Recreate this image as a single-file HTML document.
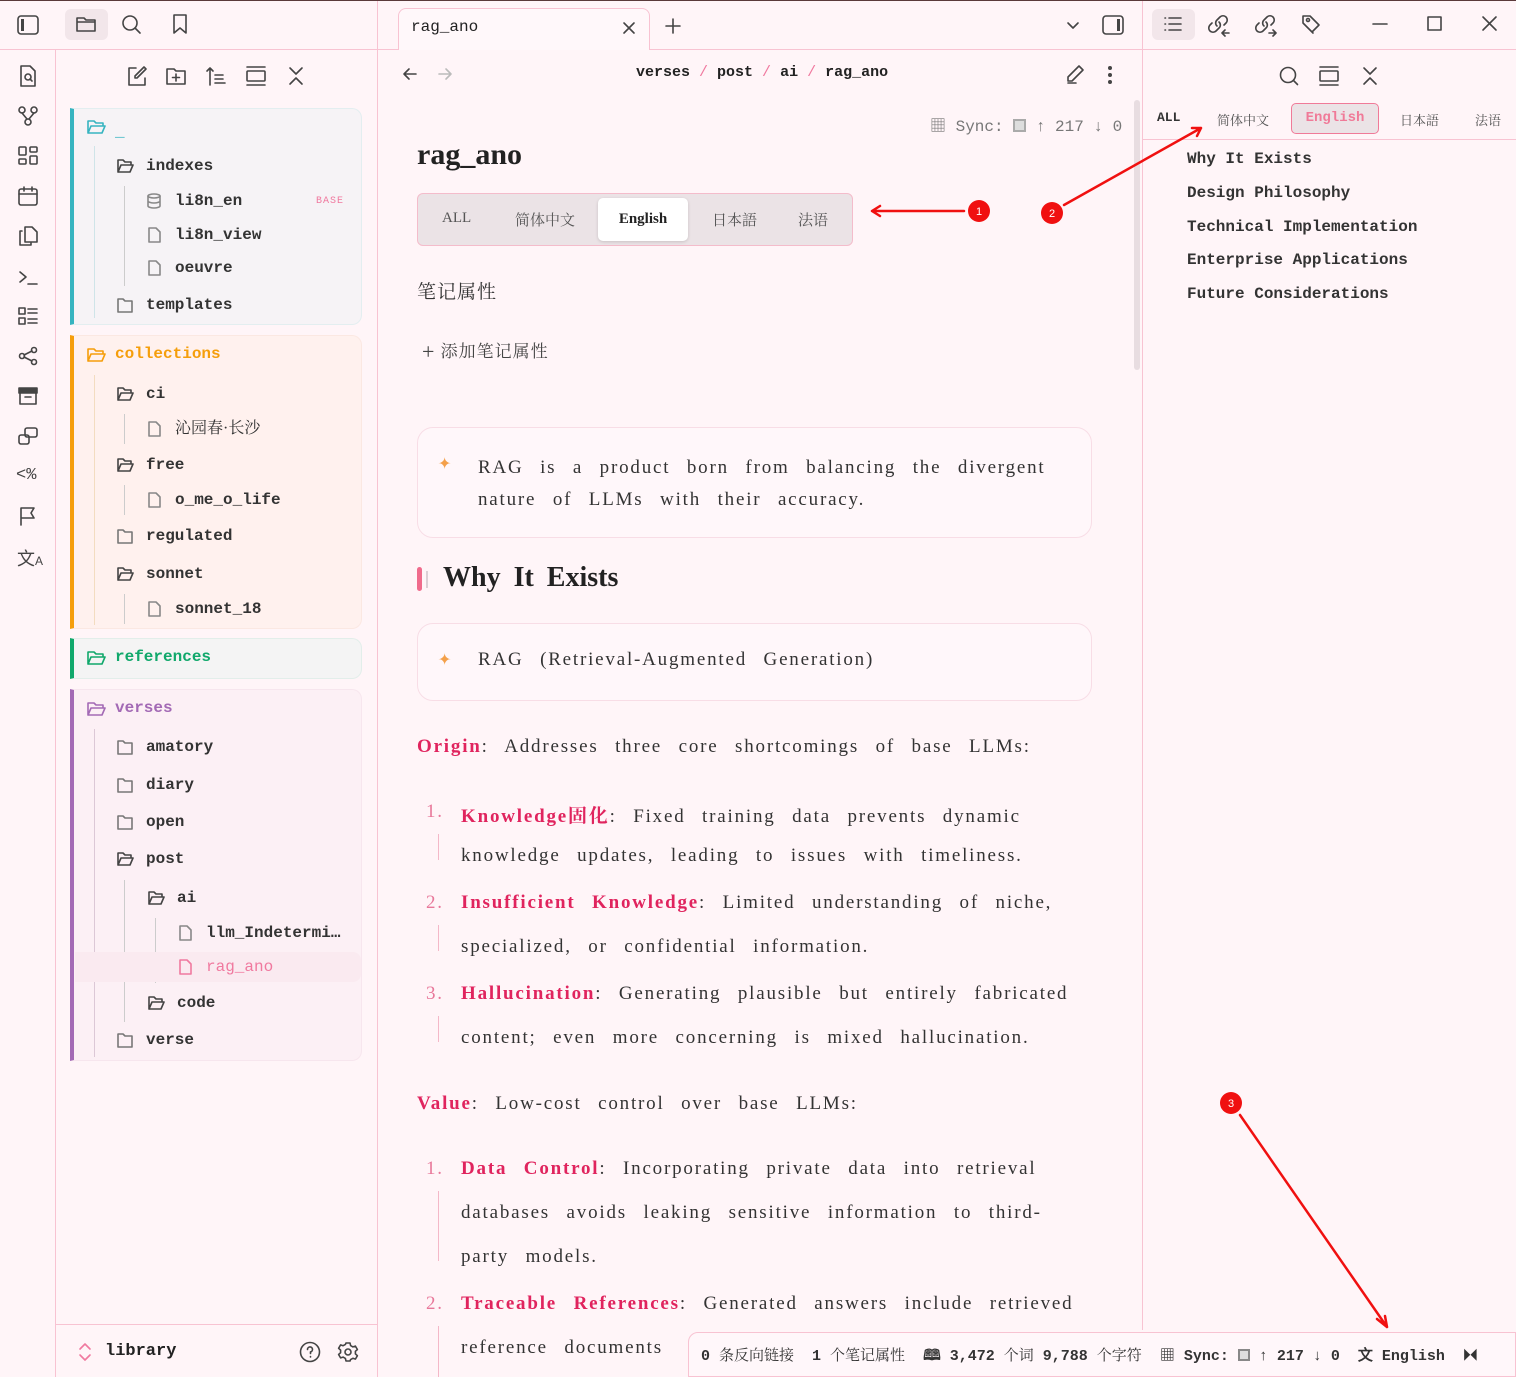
<!DOCTYPE html>
<html><head><meta charset="utf-8"><style>
*{box-sizing:border-box;margin:0;padding:0}
body{width:1516px;height:1377px;background:#fff5f8;position:relative;overflow:hidden;font-family:"Liberation Mono","Noto Sans CJK SC",monospace;color:#2b2b2b}
.a{position:absolute}
.mono{font-family:"Liberation Mono","Noto Sans CJK SC",monospace}
.serif{font-family:"Liberation Serif","Noto Serif CJK SC",serif}
svg{stroke:#444;fill:none;stroke-width:1.6;stroke-linecap:round;stroke-linejoin:round}
.card{position:absolute;left:70px;width:292px;border-radius:0 10px 10px 0}
.row{position:absolute;font-size:16px;font-weight:bold;color:#333;height:22px;line-height:22px;white-space:nowrap}
.row svg{position:absolute;left:-30px;top:2px;width:18px;height:18px}
.p{font-size:19px;letter-spacing:1.8px;word-spacing:10px;color:#333}
.red{color:#e0245e;font-weight:bold}
.num{color:#e8789a}
.bar{position:absolute;width:1px;background:#f4b8c8}
</style></head><body>
<div class="a" style="left:0;top:49px;width:1516px;height:1px;background:#f8c3d2"></div>
<div class="a" style="left:55px;top:50px;width:1px;height:1327px;background:#f8c3d2"></div>
<div class="a" style="left:377px;top:0;width:1px;height:1377px;background:#f8c3d2"></div>
<div class="a" style="left:1142px;top:0;width:1px;height:1330px;background:#f8c3d2"></div>
<div class="a" style="left:1143px;top:139px;width:373px;height:1px;background:#f8c3d2"></div>
<div class="a" style="left:55px;top:1324px;width:322px;height:1px;background:#f8c3d2"></div>
<div class="a" style="left:0;top:0;width:1516px;height:1px;background:#5a3a3a"></div>

<svg class="a" style="left:16px;top:14px" width="24" height="22" viewBox="0 0 24 22"><rect x="2" y="2" width="20" height="18" rx="3"/><rect x="5" y="5" width="3" height="12" fill="#444" stroke="none"/></svg>
<div class="a" style="left:65px;top:9px;width:43px;height:31px;background:#f2e6ea;border-radius:6px"></div>
<svg class="a" style="left:75px;top:14px" width="22" height="20" viewBox="0 0 22 20"><path d="M2 4h7l2 2h9v11H2z M2 8h18"/></svg>
<svg class="a" style="left:121px;top:14px" width="22" height="22" viewBox="0 0 22 22"><circle cx="9" cy="9" r="7"/><path d="M14 14l5 5"/></svg>
<svg class="a" style="left:170px;top:13px" width="20" height="22" viewBox="0 0 20 22"><path d="M4 2h12v18l-6-5-6 5z"/></svg>

<svg class="a" style="left:17px;top:64px" width="22" height="24" viewBox="0 0 22 24"><path d="M4 2h9l5 5v15H4z"/><circle cx="11" cy="13" r="3"/><path d="M13 15l2 2"/></svg>
<svg class="a" style="left:17px;top:105px" width="22" height="22" viewBox="0 0 22 22"><circle cx="5" cy="5" r="3"/><circle cx="17" cy="5" r="3"/><circle cx="11" cy="17" r="3"/><path d="M5 8l5 6M17 8l-5 6"/></svg>
<svg class="a" style="left:17px;top:145px" width="22" height="22" viewBox="0 0 22 22"><rect x="2" y="2" width="7" height="8" rx="1"/><rect x="13" y="2" width="7" height="5" rx="1"/><rect x="2" y="14" width="7" height="5" rx="1"/><rect x="13" y="11" width="7" height="8" rx="1"/></svg>
<svg class="a" style="left:17px;top:185px" width="22" height="22" viewBox="0 0 22 22"><rect x="2" y="4" width="18" height="16" rx="2"/><path d="M2 9h18M7 2v4M15 2v4"/></svg>
<svg class="a" style="left:17px;top:225px" width="22" height="22" viewBox="0 0 22 22"><path d="M8 2h7l5 5v10H8z M5 6H3v14h11v-2"/></svg>
<svg class="a" style="left:17px;top:266px" width="22" height="22" viewBox="0 0 22 22"><path d="M3 6l6 5-6 5M11 18h9"/></svg>
<svg class="a" style="left:17px;top:305px" width="22" height="22" viewBox="0 0 22 22"><rect x="2" y="3" width="6" height="6"/><rect x="2" y="13" width="6" height="6"/><path d="M11 4h9M11 8h9M11 14h9M11 18h9"/></svg>
<svg class="a" style="left:17px;top:345px" width="22" height="22" viewBox="0 0 22 22"><circle cx="5" cy="11" r="2.5"/><circle cx="17" cy="5" r="2.5"/><circle cx="17" cy="17" r="2.5"/><path d="M7 10l8-4M7 12l8 4"/></svg>
<svg class="a" style="left:17px;top:385px" width="22" height="22" viewBox="0 0 22 22"><rect x="2" y="3" width="18" height="5" fill="#444"/><path d="M3 8v11h16V8M8 12h6"/></svg>
<svg class="a" style="left:17px;top:425px" width="22" height="22" viewBox="0 0 22 22"><rect x="8" y="3" width="12" height="9" rx="2"/><rect x="2" y="10" width="10" height="9" rx="2"/></svg>
<div class="a" style="left:16px;top:466px;font-size:17px;color:#444">&lt;%</div>
<svg class="a" style="left:17px;top:505px" width="22" height="22" viewBox="0 0 22 22"><path d="M4 20V3h13l-3 5 3 5H4"/></svg>
<div class="a" style="left:17px;top:545px;font-size:18px;color:#444;font-family:'Liberation Sans',sans-serif">文<span style="font-size:12px">A</span></div>

<svg class="a" style="left:126px;top:65px" width="22" height="22" viewBox="0 0 22 22"><path d="M10 3H3v17h16v-7M18 2l2 2-9 9H9v-2z"/></svg>
<svg class="a" style="left:165px;top:65px" width="22" height="22" viewBox="0 0 22 22"><path d="M2 4h7l2 2h9v13H2zM11 9v7M7.5 12.5h7"/></svg>
<svg class="a" style="left:205px;top:65px" width="22" height="22" viewBox="0 0 22 22"><path d="M5 20V3M2 6l3-3 3 3M10 10h8M10 14h8M10 18h10"/></svg>
<svg class="a" style="left:245px;top:65px" width="22" height="22" viewBox="0 0 22 22"><path d="M2 2h18M2 20h18"/><rect x="2" y="6" width="18" height="10" rx="1"/></svg>
<svg class="a" style="left:285px;top:65px" width="22" height="22" viewBox="0 0 22 22"><path d="M5 3l6 6 6-6M5 19l6-6 6 6"/></svg>

<div class="card" style="top:108px;height:217px;background:#f6f3f6;border:1px solid #e3eef0;border-left:4px solid #36b4c0"></div>
<svg class="a" style="left:86px;top:118px;stroke:#36b4c0" width="20" height="18" viewBox="0 0 20 18"><path d="M2 3h6l2 2h7v3M2 3v12h14l3-7H5l-3 7"/></svg>
<div class="a" style="left:115px;top:123px;color:#36b4c0;font-weight:bold">_</div>
<div class="bar" style="left:94px;top:146px;height:172px;background:#cfe4e8"></div>
<div class="row" style="left:146px;top:155px">indexes<svg viewBox="0 0 18 18"><path d="M2 3h5l2 2h6v3M2 3v12h12l3-7H5l-3 7"/></svg></div>
<div class="bar" style="left:124px;top:186px;height:100px;background:#ccc"></div>
<div class="row" style="left:175px;top:190px">li8n_en<svg viewBox="0 0 18 18" style="stroke:#888"><ellipse cx="9" cy="4" rx="6" ry="2"/><path d="M3 4v10c0 1 3 2 6 2s6-1 6-2V4M3 9c0 1 3 2 6 2s6-1 6-2"/></svg></div>
<div class="a" style="left:316px;top:196px;font-size:10px;color:#f0799f;letter-spacing:1px">BASE</div>
<div class="row" style="left:175px;top:224px">li8n_view<svg viewBox="0 0 18 18" style="stroke:#888"><path d="M4 2h7l4 4v10H4z"/></svg></div>
<div class="row" style="left:175px;top:257px">oeuvre<svg viewBox="0 0 18 18" style="stroke:#888"><path d="M4 2h7l4 4v10H4z"/></svg></div>
<div class="row" style="left:146px;top:294px">templates<svg viewBox="0 0 18 18" style="stroke:#777"><path d="M2 3h5l2 2h7v11H2z"/></svg></div>

<div class="card" style="top:335px;height:294px;background:#fff1ee;border:1px solid #fbe8e2;border-left:4px solid #f59e0b"></div>
<svg class="a" style="left:86px;top:346px;stroke:#f59e0b" width="20" height="18" viewBox="0 0 20 18"><path d="M2 3h6l2 2h7v3M2 3v12h14l3-7H5l-3 7"/></svg>
<div class="a" style="left:115px;top:345px;color:#f59e0b;font-weight:bold;font-size:16px">collections</div>
<div class="bar" style="left:94px;top:375px;height:250px;background:#f3dcc0"></div>
<div class="row" style="left:146px;top:383px">ci<svg viewBox="0 0 18 18"><path d="M2 3h5l2 2h6v3M2 3v12h12l3-7H5l-3 7"/></svg></div>
<div class="bar" style="left:124px;top:414px;height:30px;background:#ccc"></div>
<div class="row serif" style="left:175px;top:418px;font-weight:normal">沁园春·长沙<svg viewBox="0 0 18 18" style="stroke:#888"><path d="M4 2h7l4 4v10H4z"/></svg></div>
<div class="row" style="left:146px;top:454px">free<svg viewBox="0 0 18 18"><path d="M2 3h5l2 2h6v3M2 3v12h12l3-7H5l-3 7"/></svg></div>
<div class="bar" style="left:124px;top:485px;height:30px;background:#ccc"></div>
<div class="row" style="left:175px;top:489px">o_me_o_life<svg viewBox="0 0 18 18" style="stroke:#888"><path d="M4 2h7l4 4v10H4z"/></svg></div>
<div class="row" style="left:146px;top:525px">regulated<svg viewBox="0 0 18 18" style="stroke:#777"><path d="M2 3h5l2 2h7v11H2z"/></svg></div>
<div class="row" style="left:146px;top:563px">sonnet<svg viewBox="0 0 18 18"><path d="M2 3h5l2 2h6v3M2 3v12h12l3-7H5l-3 7"/></svg></div>
<div class="bar" style="left:124px;top:594px;height:30px;background:#ccc"></div>
<div class="row" style="left:175px;top:598px">sonnet_18<svg viewBox="0 0 18 18" style="stroke:#888"><path d="M4 2h7l4 4v10H4z"/></svg></div>

<div class="card" style="top:638px;height:41px;background:#f4f4f4;border:1px solid #e2eeea;border-left:4px solid #10a86b"></div>
<svg class="a" style="left:86px;top:649px;stroke:#10a86b" width="20" height="18" viewBox="0 0 20 18"><path d="M2 3h6l2 2h7v3M2 3v12h14l3-7H5l-3 7"/></svg>
<div class="a" style="left:115px;top:648px;color:#10a86b;font-weight:bold;font-size:16px">references</div>

<div class="card" style="top:689px;height:372px;background:#fcf0f5;border:1px solid #f7e6ee;border-left:4px solid #a36ab5"></div>
<svg class="a" style="left:86px;top:700px;stroke:#a36ab5" width="20" height="18" viewBox="0 0 20 18"><path d="M2 3h6l2 2h7v3M2 3v12h14l3-7H5l-3 7"/></svg>
<div class="a" style="left:115px;top:699px;color:#a36ab5;font-weight:bold;font-size:16px">verses</div>
<div class="bar" style="left:94px;top:729px;height:328px;background:#dcc8d6"></div>
<div class="row" style="left:146px;top:736px">amatory<svg viewBox="0 0 18 18" style="stroke:#777"><path d="M2 3h5l2 2h7v11H2z"/></svg></div>
<div class="row" style="left:146px;top:774px">diary<svg viewBox="0 0 18 18" style="stroke:#777"><path d="M2 3h5l2 2h7v11H2z"/></svg></div>
<div class="row" style="left:146px;top:811px">open<svg viewBox="0 0 18 18" style="stroke:#777"><path d="M2 3h5l2 2h7v11H2z"/></svg></div>
<div class="row" style="left:146px;top:848px">post<svg viewBox="0 0 18 18"><path d="M2 3h5l2 2h6v3M2 3v12h12l3-7H5l-3 7"/></svg></div>
<div class="bar" style="left:124px;top:880px;height:142px;background:#ccc"></div>
<div class="row" style="left:177px;top:887px">ai<svg viewBox="0 0 18 18"><path d="M2 3h5l2 2h6v3M2 3v12h12l3-7H5l-3 7"/></svg></div>
<div class="bar" style="left:155px;top:918px;height:65px;background:#ccc"></div>
<div class="a" style="left:75px;top:952px;width:286px;height:30px;background:#faeaf0;border-radius:0 8px 8px 0"></div>
<div class="row" style="left:206px;top:922px">llm_Indetermi…<svg viewBox="0 0 18 18" style="stroke:#888"><path d="M4 2h7l4 4v10H4z"/></svg></div>
<div class="row" style="left:206px;top:956px;color:#f0799f;font-weight:normal">rag_ano<svg viewBox="0 0 18 18" style="stroke:#f0799f"><path d="M4 2h7l4 4v10H4z"/></svg></div>
<div class="row" style="left:177px;top:992px">code<svg viewBox="0 0 18 18"><path d="M2 3h5l2 2h6v3M2 3v12h12l3-7H5l-3 7"/></svg></div>
<div class="row" style="left:146px;top:1029px">verse<svg viewBox="0 0 18 18" style="stroke:#777"><path d="M2 3h5l2 2h7v11H2z"/></svg></div>

<svg class="a" style="left:77px;top:1342px;stroke:#f0799f" width="16" height="20" viewBox="0 0 16 20"><path d="M3 7l5-5 5 5M3 13l5 5 5-5"/></svg>
<div class="a" style="left:105px;top:1342px;font-size:17px;font-weight:bold;color:#222">library</div>
<svg class="a" style="left:299px;top:1341px" width="22" height="22" viewBox="0 0 22 22"><circle cx="11" cy="11" r="9.5"/><path d="M8.5 8.5a2.5 2.5 0 1 1 3 2.4v1.6M11.5 15.5v.5"/></svg>
<svg class="a" style="left:337px;top:1341px" width="22" height="22" viewBox="0 0 22 22"><circle cx="11" cy="11" r="3"/><path d="M9 2h4l.6 2.6 2.3 1.3 2.5-.8 2 3.4-2 1.8v2.6l2 1.8-2 3.4-2.5-.8-2.3 1.3L13 20H9l-.6-2.6-2.3-1.3-2.5.8-2-3.4 2-1.8V9.1l-2-1.8 2-3.4 2.5.8 2.3-1.3z"/></svg>

<div class="a" style="left:398px;top:8px;width:252px;height:42px;background:#fff8fa;border:1px solid #f8c3d2;border-bottom:none;border-radius:8px 8px 0 0"></div>
<div class="a" style="left:411px;top:18px;font-size:16px;color:#222">rag_ano</div>
<svg class="a" style="left:621px;top:20px" width="16" height="16" viewBox="0 0 16 16"><path d="M3 3l10 10M13 3L3 13"/></svg>
<svg class="a" style="left:663px;top:16px" width="20" height="20" viewBox="0 0 20 20"><path d="M10 3v14M3 10h14"/></svg>
<svg class="a" style="left:1065px;top:19px" width="16" height="14" viewBox="0 0 16 14"><path d="M3 4l5 5 5-5"/></svg>
<svg class="a" style="left:1101px;top:14px" width="24" height="22" viewBox="0 0 24 22"><rect x="2" y="2" width="20" height="18" rx="3"/><rect x="16" y="5" width="3" height="12" fill="#444" stroke="none"/></svg>

<svg class="a" style="left:400px;top:64px" width="20" height="20" viewBox="0 0 20 20"><path d="M16 10H4M9 5l-5 5 5 5"/></svg>
<svg class="a" style="left:435px;top:64px;stroke:#bbb" width="20" height="20" viewBox="0 0 20 20"><path d="M4 10h12M11 5l5 5-5 5"/></svg>
<div class="a" style="left:636px;top:64px;font-size:15px;font-weight:bold;color:#222;white-space:nowrap">verses <span style="color:#f0799f;font-weight:normal">/</span> post <span style="color:#f0799f;font-weight:normal">/</span> ai <span style="color:#f0799f;font-weight:normal">/</span> rag_ano</div>
<svg class="a" style="left:1064px;top:63px" width="22" height="22" viewBox="0 0 22 22"><path d="M15 3l4 4L8 18H4v-4zM4 20h8"/></svg>
<div class="a" style="left:1108px;top:66px;width:4px;height:4px;border-radius:2px;background:#444;box-shadow:0 7px 0 #444,0 14px 0 #444"></div>

<div class="a" style="left:930px;top:112px;font-size:16px;color:#777;white-space:nowrap">▦ Sync: <span style="display:inline-block;width:13px;height:13px;border:2px solid #aaa;background:#ddd;vertical-align:-1px"></span> ↑ 217 ↓ 0</div>
<div class="a" style="left:1134px;top:100px;width:6px;height:270px;background:#e8dde1;border-radius:3px"></div>

<div class="a serif" style="left:417px;top:138px;font-size:30px;font-weight:bold;color:#222">rag_ano</div>

<div class="a serif" style="left:417px;top:193px;width:436px;height:53px;background:#ebe3e6;border:1px solid #f4bccb;border-radius:6px;font-size:15px;color:#555">
<span class="a" style="left:24px;top:16px">ALL</span>
<span class="a" style="left:97px;top:15px">简体中文</span>
<span class="a" style="left:180px;top:4px;width:90px;height:43px;background:#fff;border-radius:5px;box-shadow:0 1px 3px rgba(0,0,0,.15);text-align:center;line-height:43px;color:#222;font-weight:bold">English</span>
<span class="a" style="left:294px;top:15px">日本語</span>
<span class="a" style="left:380px;top:15px">法语</span>
</div>

<svg class="a" style="left:0;top:0;stroke:#f01010;stroke-width:2.5" width="1516" height="1377" viewBox="0 0 1516 1377">
<path d="M964 211H872M880 206l-8 5 8 5"/>
<path d="M1064 205L1201 128M1192 128l9 0-4 8"/>
<path d="M1240 1115L1387 1327M1377 1319l10 8-2-11"/>
<circle cx="979" cy="211" r="11" fill="#f01010" stroke="none"/>
<circle cx="1052" cy="213" r="11" fill="#f01010" stroke="none"/>
<circle cx="1231" cy="1103" r="11" fill="#f01010" stroke="none"/>
<text x="979" y="215" fill="#fff" stroke="none" font-size="11" text-anchor="middle" font-family="Liberation Sans">1</text>
<text x="1052" y="217" fill="#fff" stroke="none" font-size="11" text-anchor="middle" font-family="Liberation Sans">2</text>
<text x="1231" y="1107" fill="#fff" stroke="none" font-size="11" text-anchor="middle" font-family="Liberation Sans">3</text>
</svg>

<div class="a serif" style="left:417px;top:277px;font-size:19px;color:#333;letter-spacing:1px">笔记属性</div>
<div class="a serif" style="left:422px;top:337px;font-size:17px;color:#444;letter-spacing:1px"><span style="font-size:22px;vertical-align:-2px">+</span> 添加笔记属性</div>

<div class="a" style="left:417px;top:427px;width:675px;height:111px;border:1px solid #f8dde6;border-radius:16px;background:#fff7fa"></div>
<div class="a" style="left:438px;top:450px;color:#f4a04a;font-size:22px">✦</div>
<div class="a serif p" style="left:478px;top:452px;width:600px;line-height:32px">RAG is a product born from balancing the divergent nature of LLMs with their accuracy.</div>

<div class="a" style="left:417px;top:567px;width:5px;height:24px;background:#f06b8c;border-radius:3px"></div>
<div class="a" style="left:426px;top:571px;width:2px;height:17px;background:#dcd0d6"></div>
<div class="a serif" style="left:443px;top:562px;font-size:28px;font-weight:bold;color:#222;word-spacing:6px">Why It Exists</div>

<div class="a" style="left:417px;top:623px;width:675px;height:78px;border:1px solid #f8dde6;border-radius:16px;background:#fff7fa"></div>
<div class="a" style="left:438px;top:646px;color:#f4a04a;font-size:22px">✦</div>
<div class="a serif p" style="left:478px;top:649px;white-space:nowrap">RAG (Retrieval-Augmented Generation)</div>

<div class="a serif p" style="left:417px;top:736px;white-space:nowrap"><span class="red">Origin</span>: Addresses three core shortcomings of base LLMs:</div>

<div class="a serif p num" style="left:426px;top:801px">1.</div>
<div class="a serif p" style="left:461px;top:801px;white-space:nowrap"><span class="red">Knowledge固化</span>: Fixed training data prevents dynamic</div>
<div class="bar" style="left:438px;top:834px;height:26px"></div>
<div class="a serif p" style="left:461px;top:845px;white-space:nowrap">knowledge updates, leading to issues with timeliness.</div>

<div class="a serif p num" style="left:426px;top:892px">2.</div>
<div class="a serif p" style="left:461px;top:892px;white-space:nowrap"><span class="red">Insufficient Knowledge</span>: Limited understanding of niche,</div>
<div class="bar" style="left:438px;top:925px;height:26px"></div>
<div class="a serif p" style="left:461px;top:936px;white-space:nowrap">specialized, or confidential information.</div>

<div class="a serif p num" style="left:426px;top:983px">3.</div>
<div class="a serif p" style="left:461px;top:983px;white-space:nowrap"><span class="red">Hallucination</span>: Generating plausible but entirely fabricated</div>
<div class="bar" style="left:438px;top:1016px;height:26px"></div>
<div class="a serif p" style="left:461px;top:1027px;white-space:nowrap">content; even more concerning is mixed hallucination.</div>

<div class="a serif p" style="left:417px;top:1093px;white-space:nowrap"><span class="red">Value</span>: Low-cost control over base LLMs:</div>

<div class="a serif p num" style="left:426px;top:1158px">1.</div>
<div class="a serif p" style="left:461px;top:1158px;white-space:nowrap"><span class="red">Data Control</span>: Incorporating private data into retrieval</div>
<div class="bar" style="left:438px;top:1191px;height:70px"></div>
<div class="a serif p" style="left:461px;top:1202px;white-space:nowrap">databases avoids leaking sensitive information to third-</div>
<div class="a serif p" style="left:461px;top:1246px;white-space:nowrap">party models.</div>

<div class="a serif p num" style="left:426px;top:1293px">2.</div>
<div class="a serif p" style="left:461px;top:1293px;white-space:nowrap"><span class="red">Traceable References</span>: Generated answers include retrieved</div>
<div class="bar" style="left:438px;top:1326px;height:51px"></div>
<div class="a serif p" style="left:461px;top:1337px;white-space:nowrap">reference documents</div>

<div class="a" style="left:688px;top:1332px;width:828px;height:45px;background:#fff7fa;border:1px solid #f8c3d2;border-radius:10px 0 0 0"></div>
<div class="a" style="left:701px;top:1344px;font-size:15px;font-weight:bold;color:#333;white-space:nowrap">0 <span class="serif" style="font-weight:normal">条反向链接</span>&nbsp; 1 <span class="serif" style="font-weight:normal">个笔记属性</span>&nbsp; 🕮 3,472 <span class="serif" style="font-weight:normal">个词</span> 9,788 <span class="serif" style="font-weight:normal">个字符</span>&nbsp; ▦ Sync: <span style="display:inline-block;width:12px;height:12px;border:2px solid #888;background:#ddd;vertical-align:-1px"></span> ↑ 217 ↓ 0&nbsp; <span style="font-family:'Liberation Sans'">文</span> English&nbsp; ⏵⏴</div>

<div class="a" style="left:1152px;top:9px;width:43px;height:31px;background:#f2e6ea;border-radius:6px"></div>
<svg class="a" style="left:1162px;top:14px" width="22" height="20" viewBox="0 0 22 20"><path d="M7 4h12M7 10h12M7 16h12M3 4h.5M3 10h.5M3 16h.5"/></svg>
<svg class="a" style="left:1207px;top:13px" width="24" height="24" viewBox="0 0 24 24"><path d="M10 13a4 4 0 0 1 0-6l3-3a4 4 0 0 1 6 6l-2 2M12 9a4 4 0 0 1 0 6l-3 3a4 4 0 0 1-6-6l2-2M16 20h6M18 17l-3 3 3 3"/></svg>
<svg class="a" style="left:1254px;top:13px" width="24" height="24" viewBox="0 0 24 24"><path d="M10 13a4 4 0 0 1 0-6l3-3a4 4 0 0 1 6 6l-2 2M12 9a4 4 0 0 1 0 6l-3 3a4 4 0 0 1-6-6l2-2M15 20h6M19 17l3 3-3 3"/></svg>
<svg class="a" style="left:1300px;top:12px" width="24" height="24" viewBox="0 0 24 24"><path d="M3 4v7l9 9 7-7-9-9zM6 14l7 7"/><circle cx="8" cy="8" r="1.5"/></svg>
<svg class="a" style="left:1370px;top:14px" width="20" height="20" viewBox="0 0 20 20"><path d="M3 10h14"/></svg>
<svg class="a" style="left:1425px;top:14px" width="20" height="20" viewBox="0 0 20 20"><rect x="3" y="3" width="13" height="13"/></svg>
<svg class="a" style="left:1480px;top:14px" width="20" height="20" viewBox="0 0 20 20"><path d="M3 3l13 13M16 3L3 16"/></svg>

<svg class="a" style="left:1278px;top:65px" width="22" height="22" viewBox="0 0 22 22"><circle cx="10" cy="10" r="7.5"/><path d="M15.5 15.5l4 4"/></svg>
<svg class="a" style="left:1318px;top:65px" width="22" height="22" viewBox="0 0 22 22"><path d="M2 2h18M2 20h18"/><rect x="2" y="6" width="18" height="10" rx="1"/></svg>
<svg class="a" style="left:1359px;top:65px" width="22" height="22" viewBox="0 0 22 22"><path d="M5 3l6 6 6-6M5 19l6-6 6 6"/></svg>

<div class="a" style="left:1157px;top:110px;font-size:13px;font-weight:bold;color:#333">ALL</div>
<div class="a serif" style="left:1217px;top:110px;font-size:13px;color:#555">简体中文</div>
<div class="a" style="left:1291px;top:103px;width:88px;height:31px;background:#ebe3e6;border:1px solid #f07a98;border-radius:5px;text-align:center;line-height:29px;font-size:14px;color:#f07a98;font-weight:bold">English</div>
<div class="a serif" style="left:1400px;top:110px;font-size:13px;color:#555">日本語</div>
<div class="a serif" style="left:1475px;top:110px;font-size:13px;color:#555">法语</div>

<div class="a" style="left:1187px;top:143px;font-size:16px;font-weight:bold;color:#333;line-height:33.8px">Why It Exists<br>Design Philosophy<br>Technical Implementation<br>Enterprise Applications<br>Future Considerations</div>
</body></html>
